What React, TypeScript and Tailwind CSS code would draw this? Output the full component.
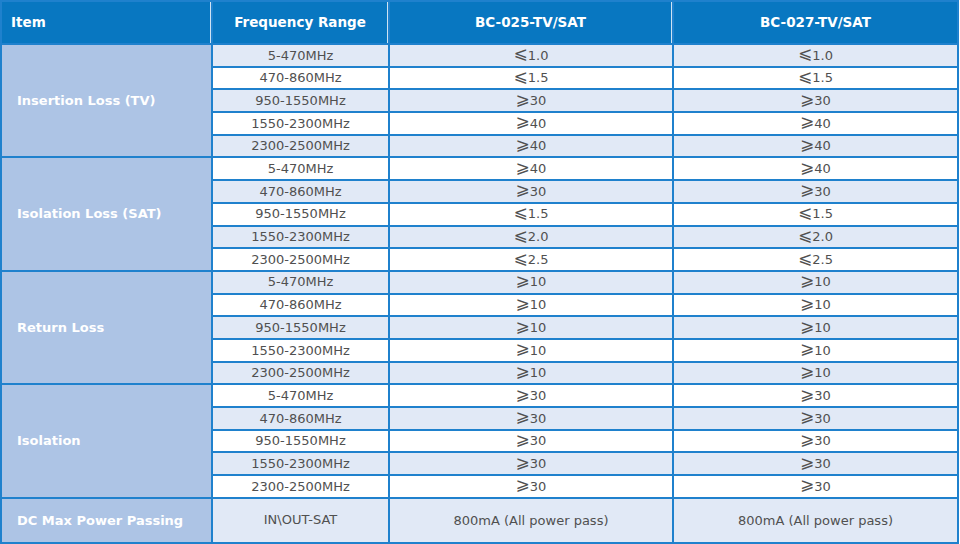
import React from "react";

type Group = { name: string; rows: [string, string, string][] };

const freqs = ["5-470MHz", "470-860MHz", "950-1550MHz", "1550-2300MHz", "2300-2500MHz"];

const groups: Group[] = [
  {
    name: "Insertion Loss (TV)",
    rows: [
      [freqs[0], "⩽1.0", "⩽1.0"],
      [freqs[1], "⩽1.5", "⩽1.5"],
      [freqs[2], "⩾30", "⩾30"],
      [freqs[3], "⩾40", "⩾40"],
      [freqs[4], "⩾40", "⩾40"],
    ],
  },
  {
    name: "Isolation Loss (SAT)",
    rows: [
      [freqs[0], "⩾40", "⩾40"],
      [freqs[1], "⩾30", "⩾30"],
      [freqs[2], "⩽1.5", "⩽1.5"],
      [freqs[3], "⩽2.0", "⩽2.0"],
      [freqs[4], "⩽2.5", "⩽2.5"],
    ],
  },
  {
    name: "Return Loss",
    rows: [
      [freqs[0], "⩾10", "⩾10"],
      [freqs[1], "⩾10", "⩾10"],
      [freqs[2], "⩾10", "⩾10"],
      [freqs[3], "⩾10", "⩾10"],
      [freqs[4], "⩾10", "⩾10"],
    ],
  },
  {
    name: "Isolation",
    rows: [
      [freqs[0], "⩾30", "⩾30"],
      [freqs[1], "⩾30", "⩾30"],
      [freqs[2], "⩾30", "⩾30"],
      [freqs[3], "⩾30", "⩾30"],
      [freqs[4], "⩾30", "⩾30"],
    ],
  },
];

const font = { fontFamily: '"DejaVu Sans", "Liberation Sans", sans-serif' };

function Value({ v }: { v: string }) {
  const sym = v.charAt(0);
  if (sym === "⩽" || sym === "⩾") {
    return (
      <span className="flex items-center">
        <span className="text-[17px] leading-none -mt-[3px]">{sym}</span>
        <span>{v.slice(1)}</span>
      </span>
    );
  }
  return <span>{v}</span>;
}

export default function App() {
  const cells: React.ReactNode[] = [];
  groups.forEach((g, gi) => {
    g.rows.forEach((r, ri) => {
      const idx = gi * 5 + ri;
      const bg = idx % 2 === 0 ? "bg-[#e1e9f6]" : "bg-white";
      if (ri === 0) {
        cells.push(
          <div
            key={`item-${gi}`}
            className="row-span-5 bg-[#adc4e5] flex items-center pl-[15px] text-white font-bold text-[13px]"
          >
            {g.name}
          </div>
        );
      }
      r.forEach((v, ci) => {
        cells.push(
          <div
            key={`${gi}-${ri}-${ci}`}
            className={`${bg} flex items-center justify-center text-[13px] text-[#505050]`}
          >
            <Value v={v} />
          </div>
        );
      });
    });
  });

  return (
    <div className="w-[960px] h-[544px] bg-white" style={font}>
      <div
        className="w-[959px] h-[544px] bg-[#1f81cd] p-[2px] grid gap-[2px]"
        style={{
          gridTemplateColumns: "209px 175px 282px 283px",
          gridTemplateRows: "41px repeat(20, 20.7px) 43px",
        }}
      >
        <div className="bg-[#0877c1] border-r border-[#cfe3f3] flex items-center pl-[9px] text-white font-bold text-[13.5px]">
          Item
        </div>
        <div className="bg-[#0877c1] border-r border-[#cfe3f3] flex items-center justify-center text-white font-bold text-[13.5px]">
          Frequency Range
        </div>
        <div className="bg-[#0877c1] border-r border-[#cfe3f3] flex items-center justify-center text-white font-bold text-[13.5px]">
          BC-025-TV/SAT
        </div>
        <div className="bg-[#0877c1] flex items-center justify-center text-white font-bold text-[13.5px]">
          BC-027-TV/SAT
        </div>
        {cells}
        <div className="bg-[#adc4e5] flex items-center pl-[15px] text-white font-bold text-[13px]">
          DC Max Power Passing
        </div>
        <div className="bg-[#e1e9f6] flex items-start justify-center pt-[11px] text-[13px] text-[#505050]">
          IN\OUT-SAT
        </div>
        <div className="bg-[#e1e9f6] flex items-center justify-center text-[13px] text-[#505050]">
          800mA (All power pass)
        </div>
        <div className="bg-[#e1e9f6] flex items-center justify-center text-[13px] text-[#505050]">
          800mA (All power pass)
        </div>
      </div>
    </div>
  );
}
